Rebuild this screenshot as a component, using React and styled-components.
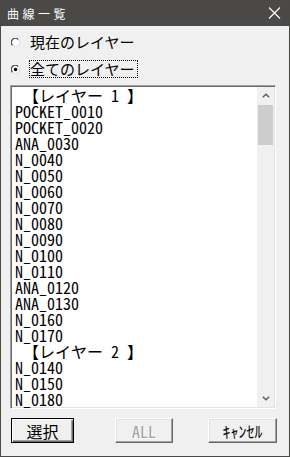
import React from "react";
import styled, { createGlobalStyle } from "styled-components";

const Global = createGlobalStyle`
  html, body { margin: 0; padding: 0; background: #f0f0f0; }
  body { width: 290px; height: 457px; overflow: hidden; }
`;

const MONO = `"Noto Sans Mono CJK JP", "Liberation Mono", "Noto Sans CJK JP", monospace`;
const JP = `"Noto Sans CJK JP", "Noto Sans", sans-serif`;

const Win = styled.div`
  width: 290px;
  height: 457px;
  box-sizing: border-box;
  border: 1px solid #4a4947;
  border-top: none;
  background: #f0f0f0;
  display: flex;
  flex-direction: column;
  font-family: ${JP};
`;

const TitleBar = styled.div`
  height: 26px;
  flex: none;
  background: #4a4947;
  display: flex;
  align-items: center;
  padding: 0 8px 0 6px;
  color: #fff;
  font-size: 12px;
  letter-spacing: 3.5px;
`;

const CloseBtn = styled.div`
  margin-left: auto;
  width: 13px;
  height: 12px;
  display: flex;
`;

const Body = styled.div`
  display: flex;
  flex-direction: column;
  padding-top: 7px;
`;

const RadioGroup = styled.div`
  display: flex;
  flex-direction: column;
  gap: 9px;
`;

const RadioRow = styled.div`
  display: flex;
  align-items: center;
  height: 18px;
  padding-left: 10px;
  gap: 9px;
`;

const RadioLabel = styled.span`
  font-size: 15px;
  line-height: 16px;
  height: 16px;
  padding: 0 2px 0 0;
  border: 1px ${(p) => (p.$focus ? "dotted #000" : "solid transparent")};
  color: #000;
  white-space: nowrap;
`;

const ListBox = styled.div`
  margin: 7px 0 0 9px;
  width: 266px;
  height: 324px;
  box-sizing: border-box;
  display: flex;
  background: #fff;
  border: 1px solid;
  border-color: #a0a0a0 #fff #fff #a0a0a0;
  box-shadow: inset 1px 1px 0 #696969, inset -1px -1px 0 #e3e3e3;
`;

const Items = styled.div`
  flex: 1;
  overflow: hidden;
  padding: 1px 0 0 4px;
`;

const Item = styled.div`
  height: 16px;
  line-height: 16px;
  font-family: ${MONO};
  font-size: 16px;
  color: #000;
  white-space: pre;
`;

const ScrollBar = styled.div`
  width: 17px;
  flex: none;
  background: #f0f0f0;
  display: flex;
  flex-direction: column;
  margin: 1px 1px 1px 0;
`;

const ArrowBtn = styled.div`
  height: 17px;
  flex: none;
  display: flex;
  align-items: center;
  justify-content: center;
`;

const Thumb = styled.div`
  height: 40px;
  margin: 1px 1px 0 1px;
  background: #cdcdcd;
`;

const Track = styled.div`
  flex: 1;
`;

const ButtonRow = styled.div`
  display: flex;
  padding-left: 10px;
  margin-top: 9px;
`;

const Btn = styled.div`
  box-sizing: border-box;
  height: 25px;
  width: ${(p) => p.$w}px;
  margin-left: ${(p) => p.$ml || 0}px;
  background: #f0f0f0;
  display: flex;
  align-items: center;
  justify-content: center;
  font-size: 16px;
  line-height: 16px;
  color: ${(p) => (p.$disabled ? "#a0a0a0" : "#000")};
  text-shadow: ${(p) => (p.$disabled ? "1px 1px 0 #fff" : "none")};
  border: 1px solid;
  border-color: ${(p) =>
    p.$default ? "#000" : "#fff #696969 #696969 #fff"};
  box-shadow: ${(p) =>
    p.$default
      ? "inset 1px 1px 0 #fff, inset -1px -1px 0 #696969, inset -2px -2px 0 #a0a0a0"
      : "inset -1px -1px 0 #a0a0a0, inset 1px 1px 0 #e3e3e3"};
`;

const MonoText = styled.span`
  font-family: ${MONO};
`;

function Radio({ checked }) {
  return (
    <svg width="9" height="9" viewBox="0 0 9 9">
      <circle cx="4.5" cy="4.5" r="3.8" fill="#fff" />
      <path d="M1.5 7.2 A3.8 3.8 0 0 1 7.2 1.5" stroke="#505050" strokeWidth="1.4" fill="none" />
      <path d="M7.6 2 A3.8 3.8 0 0 1 2 7.6" stroke="#d8d8d8" strokeWidth="1" fill="none" />
      {checked && <circle cx="4.5" cy="4.5" r="1.8" fill="#000" />}
    </svg>
  );
}

const items = [
  " 【レイヤー 1 】",
  "POCKET_0010",
  "POCKET_0020",
  "ANA_0030",
  "N_0040",
  "N_0050",
  "N_0060",
  "N_0070",
  "N_0080",
  "N_0090",
  "N_0100",
  "N_0110",
  "ANA_0120",
  "ANA_0130",
  "N_0160",
  "N_0170",
  " 【レイヤー 2 】",
  "N_0140",
  "N_0150",
  "N_0180",
];

export default function App() {
  return (
    <>
      <Global />
      <Win>
        <TitleBar>
          <span>曲線一覧</span>
          <CloseBtn>
            <svg width="13" height="12" viewBox="0 0 13 12">
              <path d="M1 0.5 L12 11.5 M12 0.5 L1 11.5" stroke="#fff" strokeWidth="1.1" />
            </svg>
          </CloseBtn>
        </TitleBar>
        <Body>
          <RadioGroup>
            <RadioRow>
              <Radio />
              <RadioLabel>現在のレイヤー</RadioLabel>
            </RadioRow>
            <RadioRow>
              <Radio checked />
              <RadioLabel $focus>全てのレイヤー</RadioLabel>
            </RadioRow>
          </RadioGroup>
          <ListBox>
            <Items>
              {items.map((t, i) => (
                <Item key={i}>{t}</Item>
              ))}
            </Items>
            <ScrollBar>
              <ArrowBtn>
                <svg width="8" height="5" viewBox="0 0 8 5">
                  <path d="M0.8 4.3 L4 1.2 L7.2 4.3" stroke="#606060" strokeWidth="1.5" fill="none" />
                </svg>
              </ArrowBtn>
              <Thumb />
              <Track />
              <ArrowBtn>
                <svg width="8" height="5" viewBox="0 0 8 5">
                  <path d="M0.8 0.7 L4 3.8 L7.2 0.7" stroke="#606060" strokeWidth="1.5" fill="none" />
                </svg>
              </ArrowBtn>
            </ScrollBar>
          </ListBox>
          <ButtonRow>
            <Btn $w={63} $default>選択</Btn>
            <Btn $w={58} $ml={41} $disabled>
              <MonoText>ALL</MonoText>
            </Btn>
            <Btn $w={69} $ml={35}>ｷｬﾝｾﾙ</Btn>
          </ButtonRow>
        </Body>
      </Win>
    </>
  );
}
